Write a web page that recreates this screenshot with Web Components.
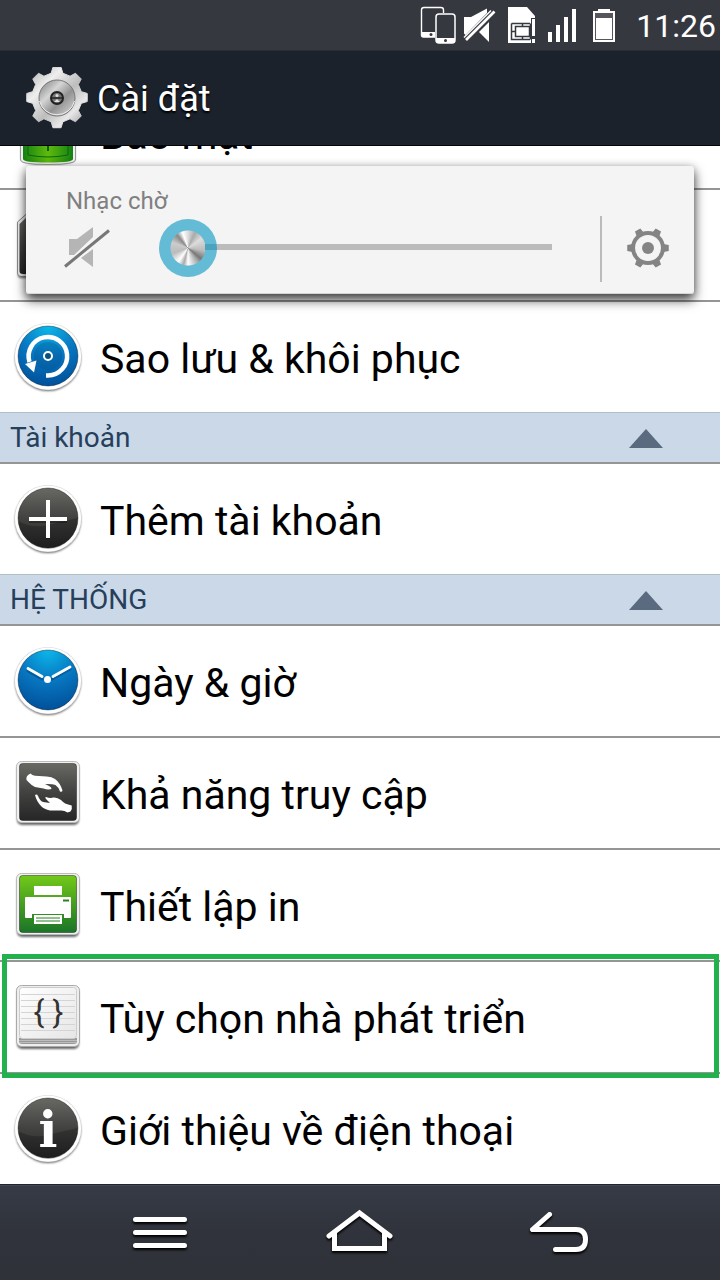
<!DOCTYPE html>
<html lang="vi">
<head>
<meta charset="utf-8">
<meta name="viewport" content="width=device-width, initial-scale=1">
<title>Cài đặt</title>
<style>
  body { margin: 0; font-family: Roboto, "Noto Sans", sans-serif; }
</style>
</head>
<body>
<settings-screen>
  <status-bar slot="status" time="11:26"></status-bar>
  <title-bar slot="header">Cài đặt</title-bar>
  <volume-panel slot="overlay">Nhạc chờ</volume-panel>

  <setting-row icon="security" divider>Bảo mật</setting-row>
  <setting-row icon="sdcard" divider></setting-row>
  <setting-row icon="backup">Sao lưu &amp; khôi phục</setting-row>
  <section-header>Tài khoản</section-header>
  <setting-row icon="add">Thêm tài khoản</setting-row>
  <section-header>HỆ THỐNG</section-header>
  <setting-row icon="clock" divider>Ngày &amp; giờ</setting-row>
  <setting-row icon="hands" divider>Khả năng truy cập</setting-row>
  <setting-row icon="printer" divider>Thiết lập in</setting-row>
  <setting-row icon="developer" divider highlighted>Tùy chọn nhà phát triển</setting-row>
  <setting-row icon="info">Giới thiệu về điện thoại</setting-row>

  <nav-bar slot="nav"></nav-bar>
</settings-screen>

<script>
// Closed gear outline: `teeth` trapezoids between radius r1 (root) and r2 (tip).
function gearPath(cx, cy, r1, r2, teeth, rootHalf, tipHalf) {
  const points = [];
  const step = (Math.PI * 2) / teeth;
  for (let i = 0; i < teeth; i++) {
    const mid = i * step;
    for (const [r, a] of [[r1, -rootHalf], [r2, -tipHalf], [r2, tipHalf], [r1, rootHalf]]) {
      const x = cx + r * Math.cos(mid + a * step);
      const y = cy + r * Math.sin(mid + a * step);
      points.push(`${x.toFixed(2)} ${y.toFixed(2)}`);
    }
  }
  return `M${points.join('L')}Z`;
}

const roundBadge = (fill, art) => `
  <circle cx="34" cy="35" r="33" fill="#000" opacity=".6" filter="url(#soft)"/>
  <circle cx="34" cy="33.5" r="33.5" fill="#d8d8d8"/>
  <circle cx="34" cy="33.5" r="33" fill="#fff"/>
  <circle cx="34" cy="33" r="30" fill="url(#${fill})" stroke="#000" stroke-opacity=".35"/>
  ${fill === 'dark' ? '<path d="M4.5 36Q18 44 34 40T63.5 33A29.5 29.5 0 0 1 4.5 36Z" fill="#000" opacity=".22"/>' : ''}
  ${art}`;

const squareBadge = (fill, art) => `
  <rect x="3" y="4" width="62" height="62" rx="5" fill="#000" opacity=".6" filter="url(#soft)"/>
  <rect x="2.5" y="2.5" width="63" height="61" rx="5" fill="#f1f1f1" stroke="#bbb"/>
  <rect x="5.5" y="4.5" width="57" height="57" rx="3" fill="url(#${fill})" stroke="#000" stroke-opacity=".4"/>
  ${art}`;

const ICONS = {
  security: `
    <path d="M7 20H61V60Q61 65 34 65T7 60Z" fill="#000" opacity=".6" filter="url(#soft)"/>
    <path d="M6.5 20H61.5V61Q61.5 65.5 34 65.5T6.5 61Z" fill="#efefef" stroke="#999"/>
    <path d="M9 20H59V60Q59 63.5 34 63.5T9 60Z" fill="url(#lock)"/>
    <path d="M14 20V56Q34 60 54 56V20" fill="none" stroke="#0b650b"/>
    <path d="M34 38V52" stroke="#155a0b" stroke-width="2"/>`,
  sdcard: `
    <path d="M14 3H62Q65 3 65 6V64Q65 67 62 67H7Q4 67 4 64V12Z" fill="#000" opacity=".6" filter="url(#soft)"/>
    <path d="M13 2.5H62Q65 2.5 65 6V62Q65 65.5 62 65.5H7Q3.5 65.5 3.5 62V11Z" fill="#ececec" stroke="#888"/>
    <path d="M15 4H60Q63 4 63 7V60Q63 63 60 63H9Q5.5 63 5.5 60V13Z" fill="url(#dark)"/>`,
  backup: roundBadge('blue', `
    <circle cx="34" cy="33" r="14" fill="#04467e" opacity=".25"/>
    <path d="M32 52.5H34A19.25 19.25 0 1 0 15.5 39" fill="none" stroke="#fff" stroke-width="4.5"/>
    <path d="M11 41L22.500 37.500L20 49.500Z" fill="#fff"/>
    <circle cx="34" cy="33" r="4" fill="#075181" stroke="#fff" stroke-width="2"/>`),
  add: roundBadge('dark', `
    <path d="M34 16V54M15 36H53" stroke="#000" stroke-opacity=".3" stroke-width="4"/>
    <path d="M34 15V53M15 34H53" stroke="#fff" stroke-width="4"/>`),
  clock: roundBadge('blue', `
    <path d="M14 24L28 32M38 32L56 22" stroke="#003d78" stroke-opacity=".5" stroke-width="3" stroke-linecap="round"/>
    <path d="M14 21.5L28 29.5M39 29.5L56 20" stroke="#fff" stroke-width="2.8" stroke-linecap="round"/>
    <circle cx="33.5" cy="32.5" r="3.5" fill="#fff"/>`),
  hands: squareBadge('dark', `
    <path d="M12.5 21Q11.500 16.500 16.500 14.500Q18 16.500 21 16.700L32.700 17.500Q38 17.500 41 20Q46 23.500 48.500 31.500Q48 33.500 46 32.500Q44.500 28 41.500 26Q38 24.500 31 25L35 27Q38 28.500 37.500 30Q34 31 29.500 29.500L21 28Q17 26 14.500 23Z" fill="#fff"/>
    <path d="M21 36Q23 34.800 24 37Q26 42 29 43L36 44L32.500 40.500Q30.500 38.500 32 38Q36 39.500 39.500 38.500Q43 38 47 41Q50 45 57.700 46.500Q58.500 50 56.500 52.500L53.500 53.500Q50 51 46 51.500L36 51.500Q30 50 27.500 47.500Q22.500 42.500 21 36Z" fill="#fff"/>`),
  printer: squareBadge('green', `
    <path d="M20 15H48V24H20Z" fill="#fff"/>
    <path d="M12 26H56Q57 26 57 27V46Q57 47 56 47H50V43H18V47H12Q11 47 11 46V27Q11 26 12 26Z" fill="#fff"/>
    <path d="M49 29.5H55" stroke="#278320" stroke-width="2"/>
    <path d="M20 44H48V53H20Z" fill="#fff"/>
    <path d="M22 47H46M22 50H46" stroke="#278320" stroke-width="1"/>`),
  developer: `
    <rect x="3" y="4" width="62" height="62" rx="5" fill="#000" opacity=".6" filter="url(#soft)"/>
    <rect x="2.5" y="2.5" width="63" height="61" rx="5" fill="#eee" stroke="#aaa"/>
    <path d="M5 55H63V58Q63 61 60 61H8Q5 61 5 58Z" fill="#999"/>
    <path d="M5 57.5H63M6 59.5H62" stroke="#ccc" stroke-width=".7"/>
    <rect x="5.5" y="4.5" width="57" height="51" rx="3" fill="url(#paper)" stroke="#ccc"/>
    <path d="M7 11.5H61M7 17.5H61M7 23.5H61M7 29.5H61M7 35.5H61M7 41.5H61M7 47.5H61" stroke="#d4d4d4"/>
    <text x="25" y="40" font-size="32" text-anchor="middle" fill="#333">{</text>
    <text x="44" y="40" font-size="32" text-anchor="middle" fill="#333">}</text>`,
  info: roundBadge('dark', `
    <text x="34" y="52" font-size="50" font-weight="bold" text-anchor="middle" fill="#fff"
      font-family="DejaVu Serif, serif">i</text>`),
};

const ICON_DEFS = `
  <defs>
    <filter id="soft" x="-20%" y="-20%" width="140%" height="140%"><feGaussianBlur stdDeviation="1.2"/></filter>
    <radialGradient id="blue" cx=".5" cy="0" r="1">
      <stop offset="0" stop-color="#0bb8ea"/><stop offset=".5" stop-color="#0878c2"/><stop offset="1" stop-color="#01509a"/>
    </radialGradient>
    <linearGradient id="dark" x1="0" y1="0" x2="0" y2="1">
      <stop offset="0" stop-color="#686963"/><stop offset=".5" stop-color="#424241"/><stop offset="1" stop-color="#262626"/>
    </linearGradient>
    <linearGradient id="green" x1="0" y1="0" x2="0" y2="1">
      <stop offset="0" stop-color="#72c918"/><stop offset="1" stop-color="#1a7428"/>
    </linearGradient>
    <linearGradient id="lock">
      <stop offset="0" stop-color="#148014"/><stop offset=".5" stop-color="#5fbb0b"/><stop offset="1" stop-color="#148014"/>
    </linearGradient>
    <linearGradient id="paper" x1="0" y1="0" x2="1" y2="1">
      <stop offset="0" stop-color="#fff"/><stop offset="1" stop-color="#e6e6e6"/>
    </linearGradient>
  </defs>`;

class SettingsScreen extends HTMLElement {
  connectedCallback() {
    if (this.shadowRoot) return;
    this.attachShadow({ mode: 'open' }).innerHTML = `
      <style>
        :host { display: flex; flex-direction: column; height: 100vh; background: #fff; }
        main {
          position: relative;
          flex: 1;
          min-height: 0;
          overflow: hidden;
          display: flex;
          flex-direction: column;
          justify-content: flex-end;
        }
        ::slotted([slot="overlay"]) { position: absolute; top: 20px; left: 26px; right: 26px; z-index: 2; }
      </style>
      <slot name="status"></slot>
      <slot name="header"></slot>
      <main><slot></slot><slot name="overlay"></slot></main>
      <slot name="nav"></slot>
    `;
  }
}

class StatusBar extends HTMLElement {
  connectedCallback() {
    if (this.shadowRoot) return;
    this.attachShadow({ mode: 'open' }).innerHTML = `
      <style>
        :host {
          display: flex;
          align-items: center;
          justify-content: flex-end;
          flex-shrink: 0;
          height: 50px;
          padding-right: 4px;
          background: #36383f;
          border-bottom: 1px solid #262d36;
          color: #fff;
        }
        svg { width: 42px; height: 50px; }
        time { margin-left: 9px; padding-top: 2px; font-size: 32px; line-height: 48px; }
      </style>
      <svg viewBox="0 0 42 50" fill="none" stroke="#fff" aria-hidden="true">
        <path d="M18 37H6.5Q4.5 37 4.5 35V10Q4.5 7.5 7 7.5H24Q26.5 7.5 26.5 10V13" stroke-width="1.4"/>
        <path d="M5 32H18V37H5Z" fill="#fff" stroke="none"/>
        <circle cx="14" cy="34.5" r="1.5" fill="#36383f" stroke="none"/>
        <rect x="19" y="14" width="19" height="29" rx="3" stroke-width="1.5"/>
        <path d="M19 38H38V41Q38 43 36 43H21Q19 43 19 41Z" fill="#fff" stroke="none"/>
        <circle cx="28.5" cy="40.5" r="1.5" fill="#36383f" stroke="none"/>
      </svg>
      <svg viewBox="0 0 42 50" fill="#fff" aria-hidden="true">
        <path d="M5 17H12L28 8.5V13L6.500 35L5 33.500Z"/>
        <path d="M30 22V42L20 32Z"/>
        <path d="M7 40L35.500 11.500" stroke="#fff" stroke-width="2.600"/>
        <path d="M5 37.500L32 10.500" stroke="#fff" stroke-width="1.500"/>
      </svg>
      <svg viewBox="0 0 42 50" aria-hidden="true">
        <path d="M7 7H26L34 16V18H30V38H32V43H7Z" fill="#fff"/>
        <path d="M30 18H36V44H30Z" fill="#36383f"/>
        <path d="M10.5 23.5H29M10.5 23.5V39.5H29M10.5 31.5H14M29.5 23.5V39.5M21.5 23.5V26M21.5 37V40" fill="none" stroke="#36383f" stroke-width="1.5"/>
        <path d="M14.5 26.5H28.5V36.5H14.5Z" fill="none" stroke="#36383f" stroke-width="1.5"/>
        <path d="M31 19H34V36H31ZM31 39H34V43H31Z" fill="#fff"/>
      </svg>
      <svg viewBox="0 0 42 50" fill="#fff" aria-hidden="true">
        <path d="M5 32H9V42H5ZM13 25H17V42H13ZM21 17H25V42H21ZM29 9H33V42H29Z"/>
      </svg>
      <svg viewBox="0 0 42 50" aria-hidden="true">
        <path d="M8 11H13V9H25V11H30V42H8Z" fill="#fff"/>
        <path d="M10 13H28V40H10Z" fill="#55575c"/>
        <path d="M11 18H27V39H11Z" fill="#fff"/>
      </svg>
      <time>${this.getAttribute('time') ?? ''}</time>
    `;
  }
}

class TitleBar extends HTMLElement {
  connectedCallback() {
    if (this.shadowRoot) return;
    this.attachShadow({ mode: 'open' }).innerHTML = `
      <style>
        :host {
          display: flex;
          align-items: center;
          gap: 9px;
          flex-shrink: 0;
          height: 94px;
          padding-left: 26px;
          background: #1b222b;
          border-bottom: 1px solid #05050c;
        }
        svg { width: 62px; height: 62px; }
        h1 { margin: 0; padding-top: 2px; font-size: 36px; font-weight: 400; line-height: 40px; color: #fff; text-shadow: 0 2px 2px #000; }
      </style>
      <svg viewBox="0 0 62 62" aria-hidden="true">
        <defs>
          <linearGradient id="rim" x1="0" y1="0" x2="1" y2="1">
            <stop offset="0" stop-color="#aaa"/><stop offset=".3" stop-color="#eee"/>
            <stop offset=".55" stop-color="#bdbdbd"/><stop offset=".75" stop-color="#e8e8e8"/><stop offset="1" stop-color="#8c8c8c"/>
          </linearGradient>
          <linearGradient id="disc" x1="0" y1="0" x2="1" y2="1">
            <stop offset="0" stop-color="#777"/><stop offset=".35" stop-color="#d5d5d5"/>
            <stop offset=".6" stop-color="#929292"/><stop offset="1" stop-color="#ddd"/>
          </linearGradient>
        </defs>
        <path d="${gearPath(31, 30.5, 25, 30.5, 8, 0.3, 0.17)}" fill="url(#rim)" stroke="url(#rim)" stroke-linejoin="round"/>
        <circle cx="31" cy="31" r="18" fill="url(#disc)" stroke="#777"/>
        <path d="M13.5 34A18 18 0 0 0 48.5 34" fill="none" stroke="#eee"/>
        <circle cx="31" cy="31" r="6" fill="#777" stroke="#222" stroke-width="2"/>
        <path d="M26 31H36" stroke="#222" stroke-width="1.5"/>
        <circle cx="31" cy="28.5" r="1.500" fill="#ddd"/>
        <path d="M28 35L31 32L34 35Z" fill="#ddd"/>
      </svg>
      <h1><slot></slot></h1>
    `;
  }
}

class VolumePanel extends HTMLElement {
  connectedCallback() {
    if (this.shadowRoot) return;
    this.attachShadow({ mode: 'open' }).innerHTML = `
      <style>
        :host {
          display: flex;
          align-items: flex-end;
          height: 128px;
          background: #f4f4f4;
          border-radius: 3px;
          box-shadow: 0 6px 12px rgba(0, 0, 0, .7), 0 1px 8px rgba(0, 0, 0, .25), inset 0 -1px #d5d5d5;
        }
        .level { flex: 1; padding: 0 48px 17px 38px; }
        label { display: block; margin-bottom: 4px; padding-left: 2px; font-size: 24px; line-height: 28px; color: #808080; }
        .controls { display: flex; align-items: center; gap: 48px; }
        .controls svg { width: 47px; height: 58px; flex-shrink: 0; }
        input {
          flex: 1;
          min-width: 0;
          height: 58px;
          margin: 0;
          background: none;
          -webkit-appearance: none;
          appearance: none;
        }
        input::-webkit-slider-runnable-track {
          height: 58px;
          background: linear-gradient(#bbb, #bbb) 29px 25px / 100% 6px no-repeat;
        }
        input::-webkit-slider-thumb {
          -webkit-appearance: none;
          width: 58px;
          height: 58px;
          border-radius: 50%;
          background:
            linear-gradient(#4ba3bd, #4ba3bd) 46px 25px / 12px 6px no-repeat,
            radial-gradient(circle, transparent 17px, #64bbd5 18px),
            conic-gradient(#ddd, #aaa 25deg, #ddd 55deg, #bbb 100deg, #777 130deg, #aaa 145deg, #fff 180deg, #aaa 195deg, #fff 215deg, #bbb 250deg, #ccc 290deg, #888 320deg, #fff 340deg, #ddd);
        }
        button {
          width: 94px;
          height: 66px;
          margin: 0 0 12px;
          padding: 0;
          border: 0;
          border-left: 2px solid #bbb;
          background: none;
        }
        button svg { display: block; width: 92px; height: 66px; }
      </style>
      <div class="level">
        <label for="volume"><slot></slot></label>
        <div class="controls">
          <svg viewBox="0 0 47 58" aria-hidden="true">
            <path d="M5 20H13L29 8V18L10 36H5ZM29 30V48L17 39Z" fill="#b5b5b5"/>
            <path d="M1 47.500L45 11.500" stroke="#777" stroke-width="3"/>
          </svg>
          <input id="volume" type="range" min="0" max="15" value="0">
        </div>
      </div>
      <button aria-label="Cài đặt âm thanh">
        <svg viewBox="0 0 92 66" aria-hidden="true">
          <path d="${gearPath(46, 32, 16, 21, 6, 0.24, 0.14)}" fill="#848484"/>
          <circle cx="46" cy="32" r="17" fill="#848484"/>
          <circle cx="46" cy="32" r="13" fill="#f4f4f4"/>
          <circle cx="46" cy="32" r="6" fill="#848484"/>
        </svg>
      </button>
    `;
  }
}

class SettingRow extends HTMLElement {
  connectedCallback() {
    if (this.shadowRoot) return;
    this.attachShadow({ mode: 'open' }).innerHTML = `
      <style>
        :host { display: block; position: relative; flex-shrink: 0; }
        :host([divider]) { border-bottom: 2px solid #959595; }
        :host([highlighted])::after {
          content: "";
          position: absolute;
          inset: -8px 1px -6px 2px;
          border: 5px solid #22b14c;
          z-index: 1;
          pointer-events: none;
        }
        button {
          display: flex;
          align-items: center;
          gap: 18px;
          width: 100%;
          height: 110px;
          margin: 0;
          padding: 0 14px;
          border: 0;
          background: none;
          font: inherit;
          font-size: 41px;
          line-height: 48px;
          color: #000;
          text-align: left;
        }
        svg { width: 68px; height: 68px; flex-shrink: 0; overflow: visible; }
        span { padding-top: 4px; }
      </style>
      <button>
        <svg viewBox="0 0 68 68" aria-hidden="true">${ICON_DEFS}${ICONS[this.getAttribute('icon')] ?? ''}</svg>
        <span><slot></slot></span>
      </button>
    `;
  }
}

class SectionHeader extends HTMLElement {
  connectedCallback() {
    if (this.shadowRoot) return;
    this.attachShadow({ mode: 'open' }).innerHTML = `
      <style>
        :host { display: block; flex-shrink: 0; border-top: 1px solid #b0bfcc; border-bottom: 2px solid #959595; }
        button {
          display: flex;
          align-items: center;
          justify-content: space-between;
          width: 100%;
          height: 49px;
          padding: 0 57px 0 10px;
          border: 0;
          background: #cbd8e8;
          font: inherit;
          font-size: 28px;
          line-height: 36px;
          color: #263f5a;
        }
        svg { width: 34px; height: 21px; }
      </style>
      <button aria-expanded="true">
        <slot></slot>
        <svg viewBox="0 0 34 21" aria-hidden="true"><path d="M0 21L17 2L34 21Z" fill="#5a6b80"/></svg>
      </button>
    `;
  }
}

class NavBar extends HTMLElement {
  connectedCallback() {
    if (this.shadowRoot) return;
    this.attachShadow({ mode: 'open' }).innerHTML = `
      <style>
        :host {
          display: flex;
          justify-content: center;
          flex-shrink: 0;
          height: 95px;
          border-top: 1px solid #20242c;
          background: linear-gradient(#363b46, #30333b 50%, #2f3239);
          box-shadow: inset 0 1px #424853;
        }
        button { width: 200px; padding: 0; border: 0; background: none; }
        svg { display: block; width: 200px; height: 95px; filter: drop-shadow(0 2px 1px #000); }
      </style>
      <button aria-label="Menu">
        <svg viewBox="0 1 200 95" fill="none" stroke="#fff" stroke-width="5" stroke-linecap="round">
          <path d="M75.5 35.5H124.5M75.5 48.5H124.5M75.5 61.5H124.5"/>
        </svg>
      </button>
      <button aria-label="Trang chủ">
        <svg viewBox="0 1 200 95" fill="none" stroke="#fff" stroke-width="5" stroke-linecap="round">
          <path d="M69 52L99.5 29L130 52"/>
          <path d="M74.5 49V64.5H124.5V49" stroke-linecap="butt"/>
        </svg>
      </button>
      <button aria-label="Quay lại">
        <svg viewBox="0 1 200 95" fill="none" stroke="#fff" stroke-width="5" stroke-linecap="round" stroke-linejoin="round">
          <path d="M89.5 30.5L72.5 45.5H116Q125.5 45.500 125.5 55.5T116 65.5H95.5"/>
        </svg>
      </button>
    `;
  }
}

customElements.define('settings-screen', SettingsScreen);
customElements.define('status-bar', StatusBar);
customElements.define('title-bar', TitleBar);
customElements.define('volume-panel', VolumePanel);
customElements.define('setting-row', SettingRow);
customElements.define('section-header', SectionHeader);
customElements.define('nav-bar', NavBar);
</script>
</body>
</html>
